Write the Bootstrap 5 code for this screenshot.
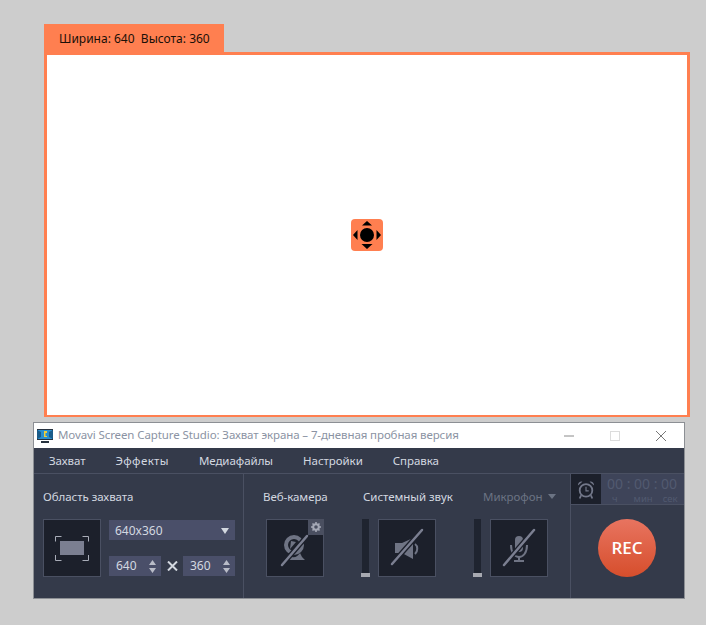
<!DOCTYPE html>
<html lang="ru">
<head>
<meta charset="utf-8">
<title>Movavi Screen Capture Studio</title>
<link href="https://cdn.jsdelivr.net/npm/bootstrap@5.3.0/dist/css/bootstrap.min.css" rel="stylesheet">
<style>
html,body{height:100%}
body{background:#cdcdcd;font-family:"Noto Sans","Open Sans",sans-serif;font-size:11.5px;line-height:16px;overflow:hidden}
.stage{padding-top:24px}
.size-tab{width:180px;height:28px;margin-left:44px;background:#ff7f50;color:#1a1008;padding-left:15px;font-size:12px;line-height:29px;white-space:pre}
.cap-frame{width:646px;height:365px;margin-left:44px;border:3px solid #ff7f50;border-bottom-width:2px;background:#fff}
.move-handle{width:32px;height:32px;border-radius:4px;background:#ff7f50}
.app-win{width:652px;height:177px;margin:5px 0 0 33px;border:1px solid #8c8f94;background:#343a4a;color:#d3d8e0}
.title-bar{height:25px;background:#fff;color:#8b93a3;padding-left:3px}
.title-txt{margin-left:5px;letter-spacing:-.1px;padding-bottom:2px}
.win-ctrl{width:46px;display:flex;justify-content:center}
.menu-bar{height:26px;border-bottom:1px solid #4a5062;padding-left:15px;gap:30px;line-height:26px;letter-spacing:-.05px}
.menu-wide{letter-spacing:.35px}
.panel-body{height:124px}
.sec-area{flex:none;width:210px;border-right:1px solid #4a5062;padding:14px 0 0 9px}
.sec-label{line-height:17px;letter-spacing:-.05px}
.area-row{margin-top:14px}
.dark-box{width:58px;height:58px;background:#1c202b;border:1px solid #4a5062;flex:none;position:relative}
.dark-box svg{display:block}
.area-controls{margin-left:8px;padding-bottom:1px;font-size:12px}
.sel-box{width:126px;height:20px;background:#4a4f69;padding:1px 6px 0;margin-top:1px;color:#d3d8e0}
.spin-box{width:52px;height:20px;background:#4a4f69;padding:0 5px 0 7px;color:#d3d8e0}
.times-sign{width:22px}
.sec-devices{flex:none;width:327px;border-right:1px solid #4a5062;padding:14px 0 0 19px}
.lbl-cam{width:100px}
.lbl-snd{width:120px}
.lbl-mic{color:#6b7383}
.dev-row{padding-left:3px;gap:38px;margin-top:14px}
.level-track{width:7px;height:58px;background:#1f2430;position:relative;margin-right:9px}
.level-thumb{position:absolute;left:-1px;bottom:0;width:9px;height:4px;background:#a7a9b1}
.gear-tag{position:absolute;right:-1px;top:-1px;width:16px;height:16px;background:#4a4f60}
.sec-rec{flex:1;min-width:0}
.timer-row{height:31px;border-bottom:1px solid #4a5062}
.alarm-box{width:30px;background:#1c202b}
.timer-box{flex:1;background:#3e4459;color:#525a70;padding-top:1px}
.timer-digits{font-size:14px;line-height:17px;padding-left:6px;white-space:pre}
.timer-units{font-size:9.5px;line-height:11px;display:flex;padding-top:1px}
.unit-h{margin-left:11px}
.unit-m{margin-left:16px}
.unit-s{margin-left:10px}
.rec-wrap{padding:14px 1px 0 0}
.rec-btn{width:58px;height:58px;border-radius:50%;border:0;padding:0;background:linear-gradient(#e87460,#d64e2c);color:#fff;font-family:"Open Sans",sans-serif;font-weight:600;font-size:17px}
.caret-down{width:0;height:0;border-left:4px solid transparent;border-right:4px solid transparent;border-top:6px solid #d3d8e0}
.caret-mic{border-top:5px solid #6b7383;margin-left:6px}
</style>
</head>
<body>
<div class="stage">
  <div class="size-tab">Ширина: 640  Высота: 360</div>
  <div class="cap-frame d-flex align-items-center justify-content-center">
    <div class="move-handle">
      <svg width="32" height="32" viewBox="0 0 32 32"><circle cx="16" cy="16" r="7" fill="#000"/><path d="M16 2l5 4.500H11zM16 30l-5.500-5h11zM2 16l4.500-5v10zM30 16l-4.500 5V11z" fill="#000"/></svg>
    </div>
  </div>
  <div class="app-win">
    <div class="title-bar d-flex align-items-center">
      <svg width="16" height="14" viewBox="0 0 16 14"><rect width="16" height="11" fill="#27323f"/><rect x="1" y="1" width="14" height="9" fill="#2a8fd0"/><path d="M0 1l4 2v5l-4 2zM16 1l-4 2v5l4 2z" fill="#1a5c8a"/><path d="M7 2h3v2H8.500v3H10v1H7z" fill="#f2cf3a"/><rect x="4" y="12" width="8" height="2" fill="#27323f"/></svg>
      <span class="title-txt flex-grow-1">Movavi Screen Capture Studio: Захват экрана – 7-дневная пробная версия</span>
      <div class="win-ctrl"><svg width="10" height="10" viewBox="0 0 10 10"><path d="M0 5h10" stroke="#8a8a8a"/></svg></div>
      <div class="win-ctrl"><svg width="10" height="10" viewBox="0 0 10 10"><rect x=".5" y=".5" width="9" height="9" fill="none" stroke="#dcdcdc"/></svg></div>
      <div class="win-ctrl"><svg width="10" height="10" viewBox="0 0 10 10"><path d="M0 0l10 10M10 0L0 10" stroke="#777"/></svg></div>
    </div>
    <div class="menu-bar d-flex">
      <span>Захват</span><span class="menu-wide">Эффекты</span><span>Медиафайлы</span><span>Настройки</span><span>Справка</span>
    </div>
    <div class="panel-body d-flex">
      <div class="sec-area">
        <div class="sec-label">Область захвата</div>
        <div class="d-flex area-row">
          <div class="dark-box">
            <svg width="56" height="56" viewBox="0 0 56 56"><rect x="16" y="21" width="24" height="14" fill="#7b7f91"/><path d="M11.500 21.500v-5h6M38.500 16.500h6v5M11.500 35v5.500h6M38.500 40.500h6V35" fill="none" stroke="#a9adb8"/></svg>
          </div>
          <div class="area-controls d-flex flex-column justify-content-between">
            <div class="sel-box d-flex align-items-center justify-content-between"><span>640x360</span><span class="caret-down"></span></div>
            <div class="d-flex">
              <div class="spin-box d-flex align-items-center justify-content-between"><span>640</span><svg width="7" height="13" viewBox="0 0 7 13"><path d="M3.500 0L7 5H0zM3.500 13L0 8h7z" fill="#b9bcc8"/></svg></div>
              <div class="times-sign d-flex align-items-center justify-content-center"><svg width="11" height="10" viewBox="0 0 11 10"><path d="M1 .5l9 9M10 .5l-9 9" stroke="#d3d8e0" stroke-width="2"/></svg></div>
              <div class="spin-box d-flex align-items-center justify-content-between"><span>360</span><svg width="7" height="13" viewBox="0 0 7 13"><path d="M3.500 0L7 5H0zM3.500 13L0 8h7z" fill="#b9bcc8"/></svg></div>
            </div>
          </div>
        </div>
      </div>
      <div class="sec-devices">
        <div class="d-flex sec-label">
          <span class="lbl-cam">Веб-камера</span><span class="lbl-snd">Системный звук</span>
          <span class="lbl-mic d-flex align-items-center">Микрофон<span class="caret-down caret-mic"></span></span>
        </div>
        <div class="d-flex dev-row">
          <div class="dark-box">
            <svg width="56" height="56" viewBox="0 0 56 56"><circle cx="27" cy="25" r="8" fill="#1c202b" stroke="#6f7484" stroke-width="4"/><path d="M24 21l5 1-6 7z" fill="#6f7484"/><path d="M23 36c4 3 8 0 10-3l2 4 3 3H23z" fill="#6f7484"/><path d="M15 45L40 16" stroke="#1c202b" stroke-width="5"/><path d="M15 45L40 16" stroke="#7b7f91" stroke-width="2.500" stroke-linecap="round"/></svg>
            <div class="gear-tag d-flex align-items-center justify-content-center">
              <svg width="10" height="10" viewBox="0 0 10 10"><circle cx="5" cy="5" r="2.800" fill="none" stroke="#a5a9b6" stroke-width="2"/><path d="M5 0v2M5 8v2M0 5h2M8 5h2M1.500 1.500l1.500 1.500M7 7l1.500 1.500M8.500 1.500L7 3M3 7L1.500 8.500" stroke="#a5a9b6" stroke-width="1.600"/></svg>
            </div>
          </div>
          <div class="d-flex">
            <div class="level-track"><div class="level-thumb"></div></div>
            <div class="dark-box">
              <svg width="56" height="56" viewBox="0 0 56 56"><path d="M16 23h7l11-5v21l-11-6h-7z" fill="#6f7484"/><path d="M36 24c3 2 3 7 0 10" fill="none" stroke="#6f7484" stroke-width="2"/><path d="M13 44L43 10" stroke="#1c202b" stroke-width="5"/><path d="M13 44L43 10" stroke="#7b7f91" stroke-width="2.500" stroke-linecap="round"/></svg>
            </div>
          </div>
          <div class="d-flex">
            <div class="level-track"><div class="level-thumb"></div></div>
            <div class="dark-box">
              <svg width="56" height="56" viewBox="0 0 56 56"><rect x="24" y="16" width="8" height="16" rx="4" fill="#6f7484"/><path d="M20 25c0 16 16 16 16 0" fill="none" stroke="#6f7484" stroke-width="2"/><path d="M28 36v4M23 41h10" stroke="#6f7484" stroke-width="2"/><path d="M13 45L43 10" stroke="#1c202b" stroke-width="5"/><path d="M13 45L43 10" stroke="#7b7f91" stroke-width="2.500" stroke-linecap="round"/></svg>
            </div>
          </div>
        </div>
      </div>
      <div class="sec-rec d-flex flex-column">
        <div class="timer-row d-flex">
          <div class="alarm-box d-flex align-items-center justify-content-center">
            <svg width="18" height="19" viewBox="0 0 20 21"><circle cx="10" cy="11.500" r="7" fill="none" stroke="#73788a" stroke-width="2"/><path d="M10 7.500v4.500h3" fill="none" stroke="#73788a" stroke-width="1.300"/><path d="M1 6c0-3 3-5 5-4zM19 6c0-3-3-5-5-4z" fill="#73788a"/><path d="M4.500 17L3 20.500M15.500 17l1.500 3.500" stroke="#73788a" stroke-width="2"/></svg>
          </div>
          <div class="timer-box">
            <div class="timer-digits">00 : 00 : 00</div>
            <div class="timer-units"><span class="unit-h">ч</span><span class="unit-m">мин</span><span class="unit-s">сек</span></div>
          </div>
        </div>
        <div class="rec-wrap d-flex justify-content-center">
          <button class="rec-btn" type="button">REC</button>
        </div>
      </div>
    </div>
  </div>
</div>
<script src="https://cdn.jsdelivr.net/npm/bootstrap@5.3.0/dist/js/bootstrap.bundle.min.js"></script>
</body>
</html>
